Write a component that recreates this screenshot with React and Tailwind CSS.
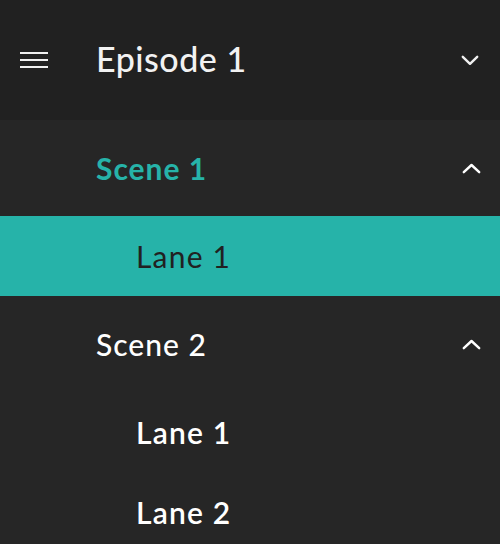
import React from "react";

function ChevronDown() {
  return (
    <svg width="18" height="11" viewBox="0 0 18 11" fill="none" stroke="currentColor" strokeWidth="2.4" strokeLinecap="round" strokeLinejoin="round">
      <path d="M1.8 1.8L9 8.8L16.2 1.8" />
    </svg>
  );
}
function ChevronUp() {
  return (
    <svg width="19" height="11" viewBox="0 0 19 11" fill="none" stroke="currentColor" strokeWidth="2.4" strokeLinecap="round" strokeLinejoin="round">
      <path d="M1.8 9.2L9.5 2L17.2 9.2" />
    </svg>
  );
}

export default function App() {
  return (
    <div className="w-[500px] h-[544px] overflow-hidden bg-[#262626] text-white" style={{ fontFamily: "Lato, 'Noto Sans', sans-serif" }}>
      <div className="h-[120px] bg-[#212121] flex items-center">
        <div className="w-[96px] pl-[20px] flex items-center">
          <svg width="28" height="18" viewBox="0 0 28 18" fill="none" stroke="#f0f0f0" strokeWidth="2.2">
            <path d="M0 2h28M0 9h28M0 16h28" />
          </svg>
        </div>
        <div className="flex-1 text-[34px] font-medium tracking-[0.5px] text-[#f2f2f2] mb-[3px]">Episode 1</div>
        <div className="pr-[21px] flex items-center text-[#f0f0f0]"><ChevronDown /></div>
      </div>
      <div className="h-[96px] flex items-center pl-[96px] pr-[19px]">
        <div className="flex-1 text-[30px] font-bold tracking-[1px] text-[#26b3a9]">Scene 1</div>
        <ChevronUp />
      </div>
      <div className="h-[80px] flex items-center pl-[136px] bg-[#26b3a9]">
        <div className="text-[30px] tracking-[1.2px] text-[#212121]">Lane 1</div>
      </div>
      <div className="h-[96px] flex items-center pl-[96px] pr-[19px]">
        <div className="flex-1 text-[30px] font-medium tracking-[1px]">Scene 2</div>
        <ChevronUp />
      </div>
      <div className="h-[80px] flex items-center pl-[136px]">
        <div className="text-[30px] font-semibold tracking-[1.2px]">Lane 1</div>
      </div>
      <div className="h-[80px] flex items-center pl-[136px]">
        <div className="text-[30px] font-semibold tracking-[1.2px]">Lane 2</div>
      </div>
    </div>
  );
}
